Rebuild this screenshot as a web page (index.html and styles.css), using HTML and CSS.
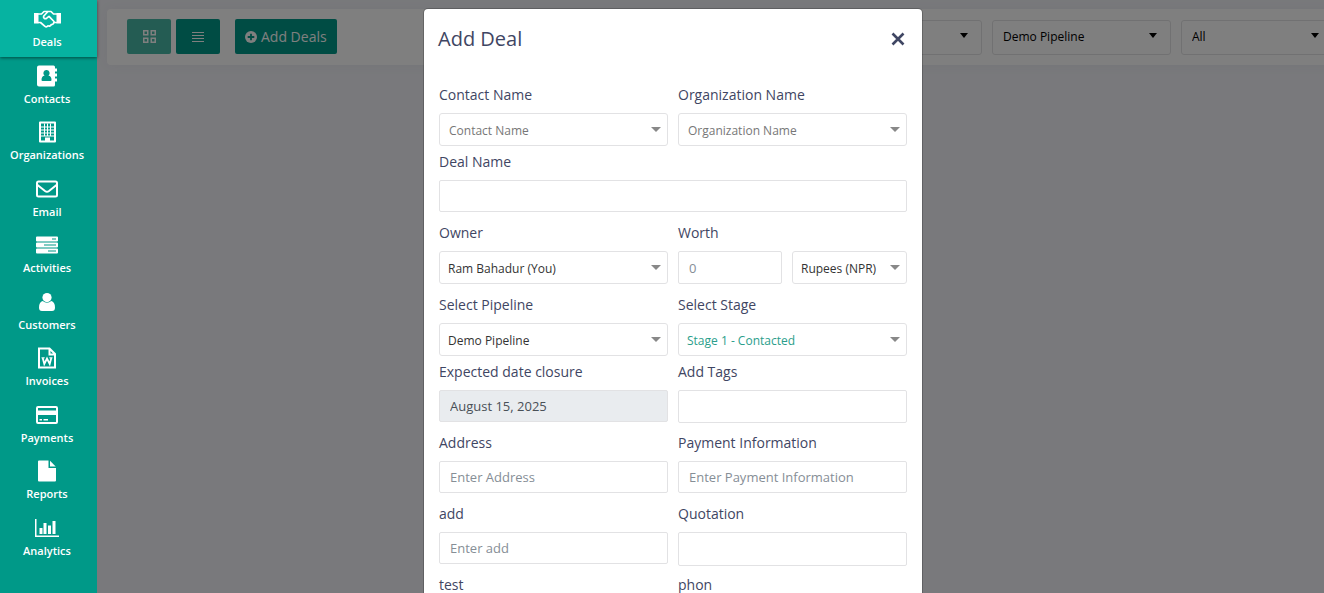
FILE: index.html
```html
<!DOCTYPE html>
<html lang="en">
<head>
	<meta charset="utf-8">
	<meta name="viewport" content="width=device-width, initial-scale=1">
	<title>Deals</title>
	<link rel="stylesheet" href="styles.css">
</head>
<body>
<div class="app">
	<nav class="sidebar">
		<a class="nav-item active" href="#">
			<svg width="27" height="18" viewBox="0 0 27 18" fill="none" stroke="#fff" stroke-width="1.700" stroke-linejoin="round" stroke-linecap="round"><path d="M0 3h4.500v10.500H0zM22.500 3H27v10.500h-4.500z" fill="#fff" stroke="none"/><path d="M4.500 4h3l2.500-2.500h3.500M22.500 4h-3L17 1.500h-3L9.800 6c-1 1.800 1 3.500 2.900 2.200L15 6.300l5 5.200M4.500 12.500h2l4.200 3.700c1.300 1 2.500.6 3.300-.4 1.500.6 2.800 0 3.200-1.300 1.700.3 2.800-1 2.500-2h2.800"/></svg>
			<span>Deals</span>
		</a>
		<a class="nav-item" href="#">
			<svg width="20" height="21" viewBox="0 0 20 21" fill="#fff"><path d="M2 0h14.500q1.500 0 1.500 1.500v18q0 1.500-1.500 1.500H2q-2 0-2-2V2q0-2 2-2zM18 3h2v3h-2zM18 8h2v3h-2zM18 13h2v3h-2z"/><path fill="#009988" d="M9.500 4.500a3 3.200 0 0 1 2 5.700c2 .1 3 1.500 3 4.300q0 1-1 1h-8q-1 0-1-1c0-2.800 1-4.200 3-4.300a3 3.200 0 0 1 2-5.700z"/></svg>
			<span>Contacts</span>
		</a>
		<a class="nav-item" href="#">
			<svg width="17" height="21" viewBox="0 0 17 21" fill="#fff"><path fill-rule="evenodd" d="M1 0h15q1 0 1 1v19q0 1-1 1H1q-1 0-1-1V1q0-1 1-1zM2 2v17h4v-3h5v3h4V2z"/><path d="M5 2h1v13H5zM8 2h1v13H8zM11 2h1v13h-1zM2 5h13v1H2zM2 8h13v1H2zM2 11h13v1H2zM2 14h13v1H2z"/></svg>
			<span>Organizations</span>
		</a>
		<a class="nav-item" href="#">
			<svg width="22" height="17" viewBox="0 0 22 17" fill="none" stroke="#fff" stroke-width="2"><rect x="1" y="1" width="20" height="15" rx="1.500"/><path d="M1.500 4.500l7.500 6q2 1.500 4 0l7.500-6"/></svg>
			<span>Email</span>
		</a>
		<a class="nav-item" href="#">
			<svg width="22" height="17" viewBox="0 0 22 17"><path fill="#fff" d="M1 0h20q1 0 1 1v3q0 1-1 1H1q-1 0-1-1V1q0-1 1-1zM1 6h20q1 0 1 1v3q0 1-1 1H1q-1 0-1-1V7q0-1 1-1zM1 12h20q1 0 1 1v3q0 1-1 1H1q-1 0-1-1v-3q0-1 1-1z"/><path fill="#009988" d="M16 2h4v1h-4zM8 8h12v1H8zM12 14h8v1h-8z"/></svg>
			<span>Activities</span>
		</a>
		<a class="nav-item" href="#">
			<svg width="16" height="18" viewBox="0 0 16 18" fill="#fff"><path d="M3.700 8Q8 11.500 12.300 8 16 9 16 14.500 16 18 13 18H3q-3 0-3-3.500Q0 9 3.700 8z"/><circle cx="8" cy="4.600" r="4.600"/></svg>
			<span>Customers</span>
		</a>
		<a class="nav-item" href="#">
			<svg width="18" height="21" viewBox="0 0 18 21" fill="none" stroke="#fff"><path stroke-width="2" d="M1 1h10.500L17 6.500V20H1zM11.500 1v6H17"/><path stroke-width="1.800" d="M4.700 10.500l1.600 6L9 11l2.700 5.500 1.600-6"/><path d="M3.500 10.300h3.200M11.300 10.300h3.200"/></svg>
			<span>Invoices</span>
		</a>
		<a class="nav-item" href="#">
			<svg width="22" height="18" viewBox="0 0 22 18" fill="#fff"><path fill-rule="evenodd" d="M2 0h18q2 0 2 2v14q0 2-2 2H2q-2 0-2-2V2q0-2 2-2zM2 2v2.500h18V2zM2 9v7h18V9z"/><path d="M3.500 13H6v1.500H3.500zM7.500 13H12v1.500H7.500z"/></svg>
			<span>Payments</span>
		</a>
		<a class="nav-item" href="#">
			<svg width="18" height="21" viewBox="0 0 18 21" fill="#fff"><path d="M1 0h9.500v7.500H18V20q0 1-1 1H1q-1 0-1-1V1q0-1 1-1z"/><path d="M12 .3L17.700 6H12z"/></svg>
			<span>Reports</span>
		</a>
		<a class="nav-item" href="#">
			<svg width="24" height="18" viewBox="0 0 24 18" fill="#fff"><path d="M0 0h1.500v16.500H24V18H0zM4.500 9h3v6h-3zM8.500 4h3v11h-3zM13 6.500h3V15h-3zM17.500 2h3v13h-3z"/></svg>
			<span>Analytics</span>
		</a>
	</nav>

	<main class="content">
		<div class="toolbar">
			<button class="btn btn-icon selected" type="button" aria-label="Board view">
				<svg width="13" height="13" viewBox="0 0 13 13" fill="none" stroke="#fff" stroke-width="1.500"><path d="M.75.75h4v4h-4zM8.250.75h4v4h-4zM.75 8.250h4v4h-4zM8.250 8.250h4v4h-4z"/></svg>
			</button>
			<button class="btn btn-icon" type="button" aria-label="List view">
				<svg width="12" height="10" viewBox="0 0 12 10" fill="#fff"><path d="M0 0h12v1H0zM0 3h12v1H0zM0 6h12v1H0zM0 9h12v1H0z"/></svg>
			</button>
			<button class="btn btn-add" type="button">
				<svg width="12" height="12" viewBox="0 0 12 12"><circle cx="6" cy="6" r="6" fill="#fff"/><path d="M6 2.700v6.600M2.700 6h6.600" stroke="#009988" stroke-width="1.800"/></svg>
				Add Deals
			</button>
			<div class="filters">
				<div class="select filter"><select aria-label="View"><option></option></select></div>
				<div class="select filter"><select aria-label="Pipeline"><option>Demo Pipeline</option></select></div>
				<div class="select filter filter-last"><select aria-label="Owner filter"><option>All</option></select></div>
			</div>
		</div>
	</main>

	<div class="overlay">
		<div class="modal" role="dialog" aria-labelledby="modal-title">
			<div class="modal-header">
				<h5 class="modal-title" id="modal-title">Add Deal</h5>
				<button class="close" type="button" aria-label="Close">
					<svg width="14" height="14" viewBox="0 0 14 14" stroke="#3f4663" stroke-width="2.600"><path d="M1.500 1.500l11 11M12.500 1.500l-11 11"/></svg>
				</button>
			</div>
			<form class="form">
				<div class="field tight">
					<label for="contact">Contact Name</label>
					<div class="select placeholder"><select id="contact"><option>Contact Name</option></select></div>
				</div>
				<div class="field tight">
					<label for="organization">Organization Name</label>
					<div class="select placeholder"><select id="organization"><option>Organization Name</option></select></div>
				</div>
				<div class="field wide">
					<label for="deal">Deal Name</label>
					<input id="deal" type="text">
				</div>
				<div class="field">
					<label for="owner">Owner</label>
					<div class="select"><select id="owner"><option>Ram Bahadur (You)</option></select></div>
				</div>
				<div class="field">
					<label for="worth">Worth</label>
					<div class="worth">
						<input class="tall" id="worth" type="text" placeholder="0">
						<div class="select"><select aria-label="Currency"><option>Rupees (NPR)</option></select></div>
					</div>
				</div>
				<div class="field tight">
					<label for="pipeline">Select Pipeline</label>
					<div class="select"><select id="pipeline"><option>Demo Pipeline</option></select></div>
				</div>
				<div class="field tight">
					<label for="stage">Select Stage</label>
					<div class="select stage"><select id="stage"><option>Stage 1 - Contacted</option></select></div>
				</div>
				<div class="field">
					<label for="closure">Expected date closure</label>
					<input id="closure" type="text" value="August 15, 2025" readonly>
				</div>
				<div class="field tight">
					<label for="tags">Add Tags</label>
					<input class="tall" id="tags" type="text">
				</div>
				<div class="field">
					<label for="address">Address</label>
					<input id="address" type="text" placeholder="Enter Address">
				</div>
				<div class="field">
					<label for="payment">Payment Information</label>
					<input id="payment" type="text" placeholder="Enter Payment Information">
				</div>
				<div class="field">
					<label for="add">add</label>
					<input id="add" type="text" placeholder="Enter add">
				</div>
				<div class="field tight">
					<label for="quotation">Quotation</label>
					<input class="taller" id="quotation" type="text">
				</div>
				<div class="field">
					<label for="test">test</label>
					<input id="test" type="text">
				</div>
				<div class="field">
					<label for="phon">phon</label>
					<input id="phon" type="text">
				</div>
			</form>
		</div>
	</div>
</div>
</body>
</html>
```
FILE: styles.css
```css
* {
	box-sizing: border-box;
}

body {
	margin: 0;
	overflow: hidden;
	background: #f2f3f8;
	color: #3f4663;
	font-family: "Open Sans", "Noto Sans", sans-serif;
	font-size: 14px;
	line-height: 21px;
}

button, input, select {
	font-family: inherit;
	margin: 0;
}

.app {
	position: relative;
	display: flex;
	min-width: 1346px;
	height: 100vh;
	overflow: hidden;
}

/* sidebar stays above the overlay */
.sidebar {
	position: relative;
	z-index: 2;
	display: flex;
	flex-direction: column;
	flex: none;
	width: 97px;
	padding-bottom: 28px;
	background: #009988;
}

.nav-item {
	display: flex;
	flex: 1;
	flex-direction: column;
	align-items: center;
	padding: 8px 3px 0 0;
	color: #fff;
	font-size: 11px;
	font-weight: 600;
	line-height: 16px;
	text-decoration: none;
}

.nav-item svg {
	height: 22px;
	margin-bottom: 4px;
}

.nav-item.active {
	background: #06b3a1;
	box-shadow: 0 1px 3px rgba(0, 0, 0, 0.5);
}

.content {
	flex: 1;
	min-width: 0;
	padding: 9px 0 0 10px;
}

.toolbar {
	display: flex;
	align-items: flex-start;
	height: 56px;
	padding: 10px 13px 10px 20px;
	border-radius: 4px;
	background: #fff;
	box-shadow: 0 0 13px rgba(82, 63, 105, 0.05);
}

.btn {
	display: flex;
	align-items: center;
	justify-content: center;
	height: 35px;
	border: 0;
	border-radius: 2px;
	background: #009988;
	color: #fff;
	font-size: 14px;
}

.btn-icon {
	width: 44px;
	padding: 0;
	margin-right: 5px;
}

.btn-icon.selected {
	background: #48b8a6;
}

.btn-add {
	gap: 4px;
	margin-left: 10px;
	padding: 0 10px;
}

.filters {
	display: flex;
	gap: 10px;
	margin-left: auto;
	padding-top: 1px;
}

.select {
	position: relative;
}

.select select {
	display: block;
	width: 100%;
	height: 33px;
	padding: 2px 24px 0 8px;
	border: 1px solid #e2e2e4;
	border-radius: 3px;
	background: #fff;
	color: #333;
	font-size: 12px;
	appearance: none;
}

.select::after {
	content: "";
	position: absolute;
	right: 7px;
	top: 14px;
	border: 5px solid transparent;
	border-top-color: #888;
	border-bottom: 0;
	pointer-events: none;
}

.select.placeholder select {
	padding-left: 9px;
	color: #777;
}

.select.stage select {
	color: #2b9e8b;
}

.filter {
	width: 179px;
}

.filter-last {
	width: 152px;
}

.filter select {
	height: 35px;
	padding: 0 24px 2px 10px;
	color: #000;
}

.filter::after {
	right: 14px;
	top: 13px;
	border-width: 4px;
	border-top-width: 5px;
	border-top-color: #000;
}

.overlay {
	position: absolute;
	inset: 0;
	z-index: 1;
	display: flex;
	align-items: flex-start;
	justify-content: center;
	padding-top: 9px;
	background: rgba(0, 0, 0, 0.5);
}

.modal {
	width: 498px;
	border-radius: 4px;
	background: #fff;
	box-shadow: 0 0 0 1px rgba(0, 0, 0, 0.2);
}

.modal-header {
	display: flex;
	align-items: center;
	justify-content: space-between;
	height: 60px;
	padding: 0 17px 0 14px;
}

.modal-title {
	margin: 0;
	font-size: 20px;
	font-weight: 400;
	line-height: 30px;
}

.close {
	display: flex;
	padding: 0;
	border: 0;
	background: none;
}

.form {
	display: grid;
	grid-template-columns: 1fr 1fr;
	column-gap: 10px;
	padding: 15px;
}

.field {
	min-width: 0;
	margin-bottom: 10px;
}

.field.tight {
	margin-bottom: 5px;
}

.field.wide {
	grid-column: 1 / -1;
}

.field label {
	display: block;
	margin-bottom: 8px;
}

.field input {
	display: block;
	width: 100%;
	height: 32px;
	padding: 0 10px;
	border: 1px solid #e2e2e4;
	border-radius: 2px;
	background: #fff;
	color: #495057;
	font-size: 13px;
}

.field input::placeholder {
	color: #868e96;
}

.field input:read-only {
	background: #e9ecef;
}

.field input.tall {
	height: 33px;
}

.field input.taller {
	height: 34px;
}

.worth {
	display: grid;
	grid-template-columns: 1fr 115px;
	gap: 10px;
}
```
